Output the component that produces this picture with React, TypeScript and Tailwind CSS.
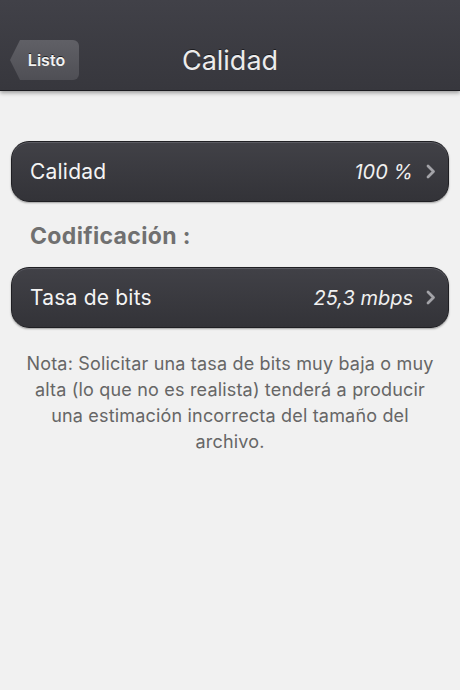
import React from "react";

function Chevron() {
  return (
    <svg width="10" height="15" viewBox="0 0 10 15" className="ml-[13px] shrink-0">
      <polyline points="2,2 7.5,7.5 2,13" fill="none" stroke="#a3a3a8" strokeWidth="2.8" strokeLinecap="round" strokeLinejoin="round" />
    </svg>
  );
}

function SettingRow({ label, value }: { label: string; value: string }) {
  return (
    <button
      type="button"
      className="flex h-[61px] w-full items-center rounded-[18px] border border-[#1f1f23] bg-gradient-to-b from-[#414147] to-[#333338] pl-[18px] pr-[12px] shadow-[inset_0_1px_0_#5b5b62,0_1px_2px_rgba(0,0,0,0.35)]"
    >
      <span className="flex-1 text-left text-[21px] tracking-[0.01em] text-[#f4f4f4]">{label}</span>
      <span className="text-[20px] italic text-[#f0f0f0]">{value}</span>
      <Chevron />
    </button>
  );
}

export default function App() {
  return (
    <div className="flex min-h-[690px] w-full flex-col bg-[#f1f1f1] font-['Inter',sans-serif]">
      <header className="relative h-[91px] border-b border-[#1c1c20] bg-gradient-to-b from-[#414148] to-[#37373d] shadow-[0_2px_4px_rgba(0,0,0,0.35)]">
        <div className="relative mt-[39px] flex h-[44px] items-center justify-center">
          <button
            type="button"
            className="absolute left-[10px] top-[1px] flex h-[40px] w-[69px] items-center justify-center rounded-r-[6px] bg-gradient-to-b from-[#606066] to-[#4f4f55] pl-[4px] text-[16px] font-semibold text-[#f2f2f2] [clip-path:polygon(10px_0,100%_0,100%_100%,10px_100%,0_50%)] [text-shadow:0_-1px_0_rgba(0,0,0,0.6)]"
          >
            Listo
          </button>
          <h1 className="text-[27px] text-[#ececec] [text-shadow:0_-1px_0_rgba(0,0,0,0.5)]">Calidad</h1>
        </div>
      </header>

      <main className="flex flex-col px-[11px] pt-[50px]">
        <SettingRow label="Calidad" value="100 %" />
        <h2 className="mt-[20px] mb-[17px] pl-[19px] text-[23px] font-bold leading-[28px] tracking-[0.015em] text-[#707070]">
          Codificación :
        </h2>
        <SettingRow label="Tasa de bits" value="25,3 mbps" />
        <p className="mt-[23px] px-[13px] text-center text-[18px] leading-[26px] tracking-[0.01em] text-[#666666]">
          Nota: Solicitar una tasa de bits muy baja o muy alta (lo que no es realista) tenderá a producir una estimación incorrecta del tamaño del archivo.
        </p>
      </main>
    </div>
  );
}
